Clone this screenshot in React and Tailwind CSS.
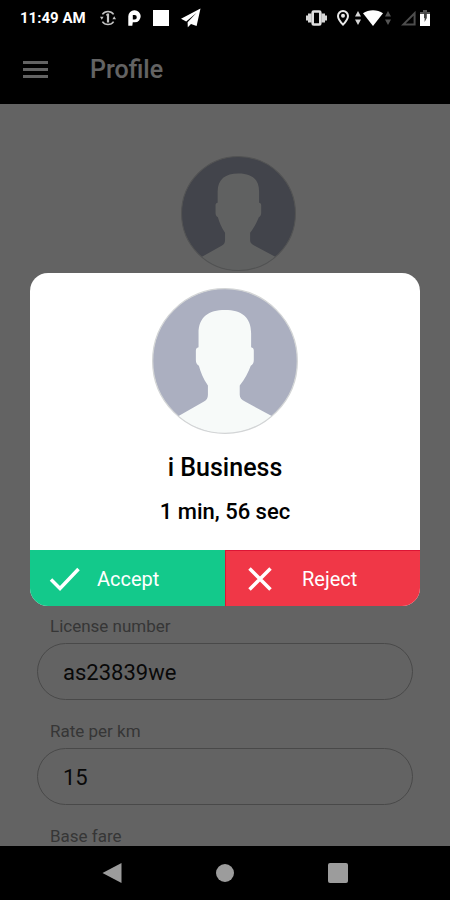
import React, { useState } from "react";

/* ======================== Icons ======================== */
function SyncAlertIcon() {
  return (
    <svg width="16" height="16" viewBox="0 0 16 16" fill="none" stroke="#c4c4c4">
      <path d="M2.4 4.4a6.800 6.800 0 0 1 11.200 0" strokeWidth="1.600" />
      <path d="M13.600 11.600a6.800 6.800 0 0 1-11.200 0" strokeWidth="1.600" />
      <path d="M0 6.800h3.600L1.800 9.800zM12.400 9.200H16L14.200 6.200z" fill="#c4c4c4" stroke="none" />
      <path d="M8 3.500v9" strokeWidth="2.200" />
      <path d="M6 4.800h2" strokeWidth="1.200" />
    </svg>
  );
}

function ParkingIcon() {
  return (
    <svg width="13" height="16" viewBox="0 0 13 16">
      <path
        fillRule="evenodd"
        fill="#fff"
        d="M.3 6.300A6 6 0 0 1 6.500.3a6 6 0 1 1 .4 12H4.800L4.300 15.700H.3zM4.800 5v4.400H6.600A2.200 2.200 0 1 0 6.600 5z"
      />
    </svg>
  );
}

function PlaneIcon() {
  return (
    <svg width="20" height="20" viewBox="0 0 20 20">
      <path fill="#fff" d="M19.500.5 0 10.800l5.200 2.600L15.600 4.800 6.600 14.200l.2 5 3.200-3.200 5.600 2z" />
    </svg>
  );
}

function VibrateIcon() {
  return (
    <svg width="21" height="16" viewBox="0 0 21 16">
      <path fill="#d6d6d6" d="M0 5.500h2v5H0zM2 3.500h3.600v9H2zM15.400 3.500H19v9h-3.600zM19 5.500h2v5h-2z" />
      <rect x="6.700" y="1.500" width="7.600" height="13" rx="1" fill="none" stroke="#e0e0e0" strokeWidth="2.600" />
    </svg>
  );
}

function PinIcon() {
  return (
    <svg width="12" height="16" viewBox="0 0 12 16">
      <path
        fill="none"
        stroke="#e8e8e8"
        strokeWidth="2"
        d="M6 1C3.200 1 1 3.200 1 5.900 1 9.300 6 14.600 6 14.600s5-5.300 5-8.700C11 3.200 8.800 1 6 1z"
      />
      <circle cx="6" cy="5.800" r="2" fill="#e8e8e8" />
    </svg>
  );
}

function UpDownIcon({ color }) {
  return (
    <svg width="6" height="14" viewBox="0 0 6 14">
      <path fill={color} d="M3 0l3 5.400H0zM3 14l3-5.400H0z" />
    </svg>
  );
}

function WifiIcon() {
  return (
    <svg width="20" height="16" viewBox="0 0 20 16">
      <path fill="#fff" d="M0 3.200C5.500-.9 14.500-.9 20 3.200L10 16z" />
    </svg>
  );
}

function SignalIcon() {
  return (
    <svg width="15" height="15" viewBox="0 0 15 15">
      <path fill="none" stroke="#4d4d4d" strokeWidth="2" d="M13.600 2.200v11.200H2.400z" />
    </svg>
  );
}

function BatteryIcon() {
  return (
    <svg width="10" height="16" viewBox="0 0 10 16">
      <path fill="#555" d="M3 0h4v2h3v5H0V2h3z" />
      <path fill="#fff" d="M0 4h10v12H0z" />
      <path fill="#444" d="M4 2.500h2.800V8L4.600 12V8H4z" />
    </svg>
  );
}

function Avatar({ className }) {
  return (
    <svg viewBox="39 25 436 436" className={className} role="img" aria-label="User">
      <defs>
        <clipPath id="face">
          <circle cx="257" cy="243" r="216" />
        </clipPath>
      </defs>
      <circle cx="257" cy="243" r="216" fill="#abafc0" />
      <path
        clipPath="url(#face)"
        fill="#f7faf9"
        d="M257 91C208 91 178 112 178 160V202C173 203 170 206 170 212V240C170 249 173 253 179 257C184 275 192 296 206 316V344C206 354 202 360 193 365L117 408V470H398V408L318 365C306 359 301 353 301 344V316C317 296 327 275 334 257C340 253 343 249 343 240V212C343 206 340 203 335 202V160C335 112 306 91 257 91Z"
      />
      <circle cx="257" cy="243" r="216" fill="none" stroke="#d3d5d6" strokeWidth="4" />
    </svg>
  );
}

/* ======================== Parts ======================== */
function StatusBar() {
  return (
    <div className="flex h-[33px] flex-shrink-0 items-center justify-between bg-black px-5 pt-[3px] text-white">
      <div className="flex items-center">
        <span className="w-20 text-[15px] font-bold whitespace-nowrap">11:49 AM</span>
        <div className="flex items-center gap-3">
          <SyncAlertIcon />
          <ParkingIcon />
          <span className="h-4 w-4 bg-white" />
          <PlaneIcon />
        </div>
      </div>
      <div className="flex items-center gap-2.5">
        <VibrateIcon />
        <div className="flex items-center gap-0.5">
          <PinIcon />
          <span className="w-0.5" />
          <UpDownIcon color="#d6d6d6" />
          <WifiIcon />
          <UpDownIcon color="#555" />
        </div>
        <div className="flex items-center gap-1">
          <SignalIcon />
          <BatteryIcon />
        </div>
      </div>
    </div>
  );
}

function Field({ id, label, value, onChange }) {
  return (
    <div className="flex flex-col gap-[5px]">
      <label htmlFor={id} className="pl-[13px] text-[17px] leading-6 text-[#8c8c8c]">
        {label}
      </label>
      <input
        id={id}
        value={value}
        onChange={(e) => onChange(id, e.target.value)}
        className="h-[57px] w-full rounded-full border border-[#bbbbbb] bg-transparent px-[25px] pt-0.5 text-[22px] text-[#181818] outline-none"
      />
    </div>
  );
}

const FIELDS = [
  { id: "license", label: "License number" },
  { id: "rate", label: "Rate per km" },
  { id: "base", label: "Base fare" },
];

function RequestDialog() {
  return (
    <div className="absolute inset-0 flex items-center bg-black/61 px-[30px]">
      <div role="dialog" aria-modal="true" className="w-full overflow-hidden rounded-[18px] bg-white text-center text-black">
        <div className="flex flex-col items-center pt-[15px] pb-[22px]">
          <Avatar className="h-[146px] w-[146px]" />
          <h2 className="mt-[18px] text-[25px] leading-8 font-medium">i Business</h2>
          <p className="mt-3 text-[22px] leading-8 font-medium">1 min, 56 sec</p>
        </div>
        <div className="grid h-14 grid-cols-2 text-xl text-white">
          <button className="flex items-center border-t border-[#13c98b] bg-[#13c98b] pl-[19px]">
            <svg width="32" height="24" viewBox="0 0 32 24" fill="none" stroke="#fff" strokeWidth="3.500">
              <path d="M2 12.500l9 9L29.500 2" />
            </svg>
            <span className="pl-4">Accept</span>
          </button>
          <button className="flex items-center border-t border-l border-[#dc1535] bg-[#f03747] pl-[22px]">
            <svg width="24" height="24" viewBox="0 0 24 24" fill="none" stroke="#fff" strokeWidth="3.500">
              <path d="M1.500 1.500l21 21M22.500 1.500l-21 21" />
            </svg>
            <span className="pl-[30px]">Reject</span>
          </button>
        </div>
      </div>
    </div>
  );
}

function NavBar() {
  return (
    <nav className="grid h-[54px] flex-shrink-0 grid-cols-3 bg-black px-14">
      <button aria-label="Back" className="flex items-center justify-center">
        <svg width="20" height="20" viewBox="0 0 20 20">
          <path fill="#9c9c9c" d="M19.500 0v20L.5 10z" />
        </svg>
      </button>
      <button aria-label="Home" className="flex items-center justify-center">
        <span className="h-[18px] w-[18px] rounded-full bg-[#9c9c9c]" />
      </button>
      <button aria-label="Recent apps" className="flex items-center justify-center">
        <span className="h-5 w-5 rounded-xs bg-[#9c9c9c]" />
      </button>
    </nav>
  );
}

/* ======================== Page ======================== */
export default function App() {
  const [values, setValues] = useState({ license: "as23839we", rate: "15", base: "" });
  const update = (id, v) => setValues((prev) => ({ ...prev, [id]: v }));

  return (
    <div className="flex h-screen flex-col overflow-hidden bg-black font-['Roboto',sans-serif]">
      <StatusBar />
      <div className="relative flex min-h-0 flex-1 flex-col overflow-hidden bg-white">
        <header className="flex h-[71px] flex-shrink-0 items-center bg-black pt-0.5 pl-[23px] text-white">
          <button aria-label="Menu" className="flex w-[25px] flex-col gap-1">
            <span className="h-[3px] w-full bg-white" />
            <span className="h-[3px] w-full bg-white" />
            <span className="h-[3px] w-full bg-white" />
          </button>
          <h1 className="pl-[42px] text-[25px] leading-8 font-medium">Profile</h1>
        </header>

        <main className="flex flex-col px-[37px] pt-[52px]">
          <Avatar className="ml-[26px] h-[115px] w-[115px] self-center" />
          <form className="mt-[343px] flex flex-col gap-[19px]">
            {FIELDS.map((f) => (
              <Field key={f.id} {...f} value={values[f.id]} onChange={update} />
            ))}
          </form>
        </main>

        <RequestDialog />
      </div>
      <NavBar />
    </div>
  );
}
